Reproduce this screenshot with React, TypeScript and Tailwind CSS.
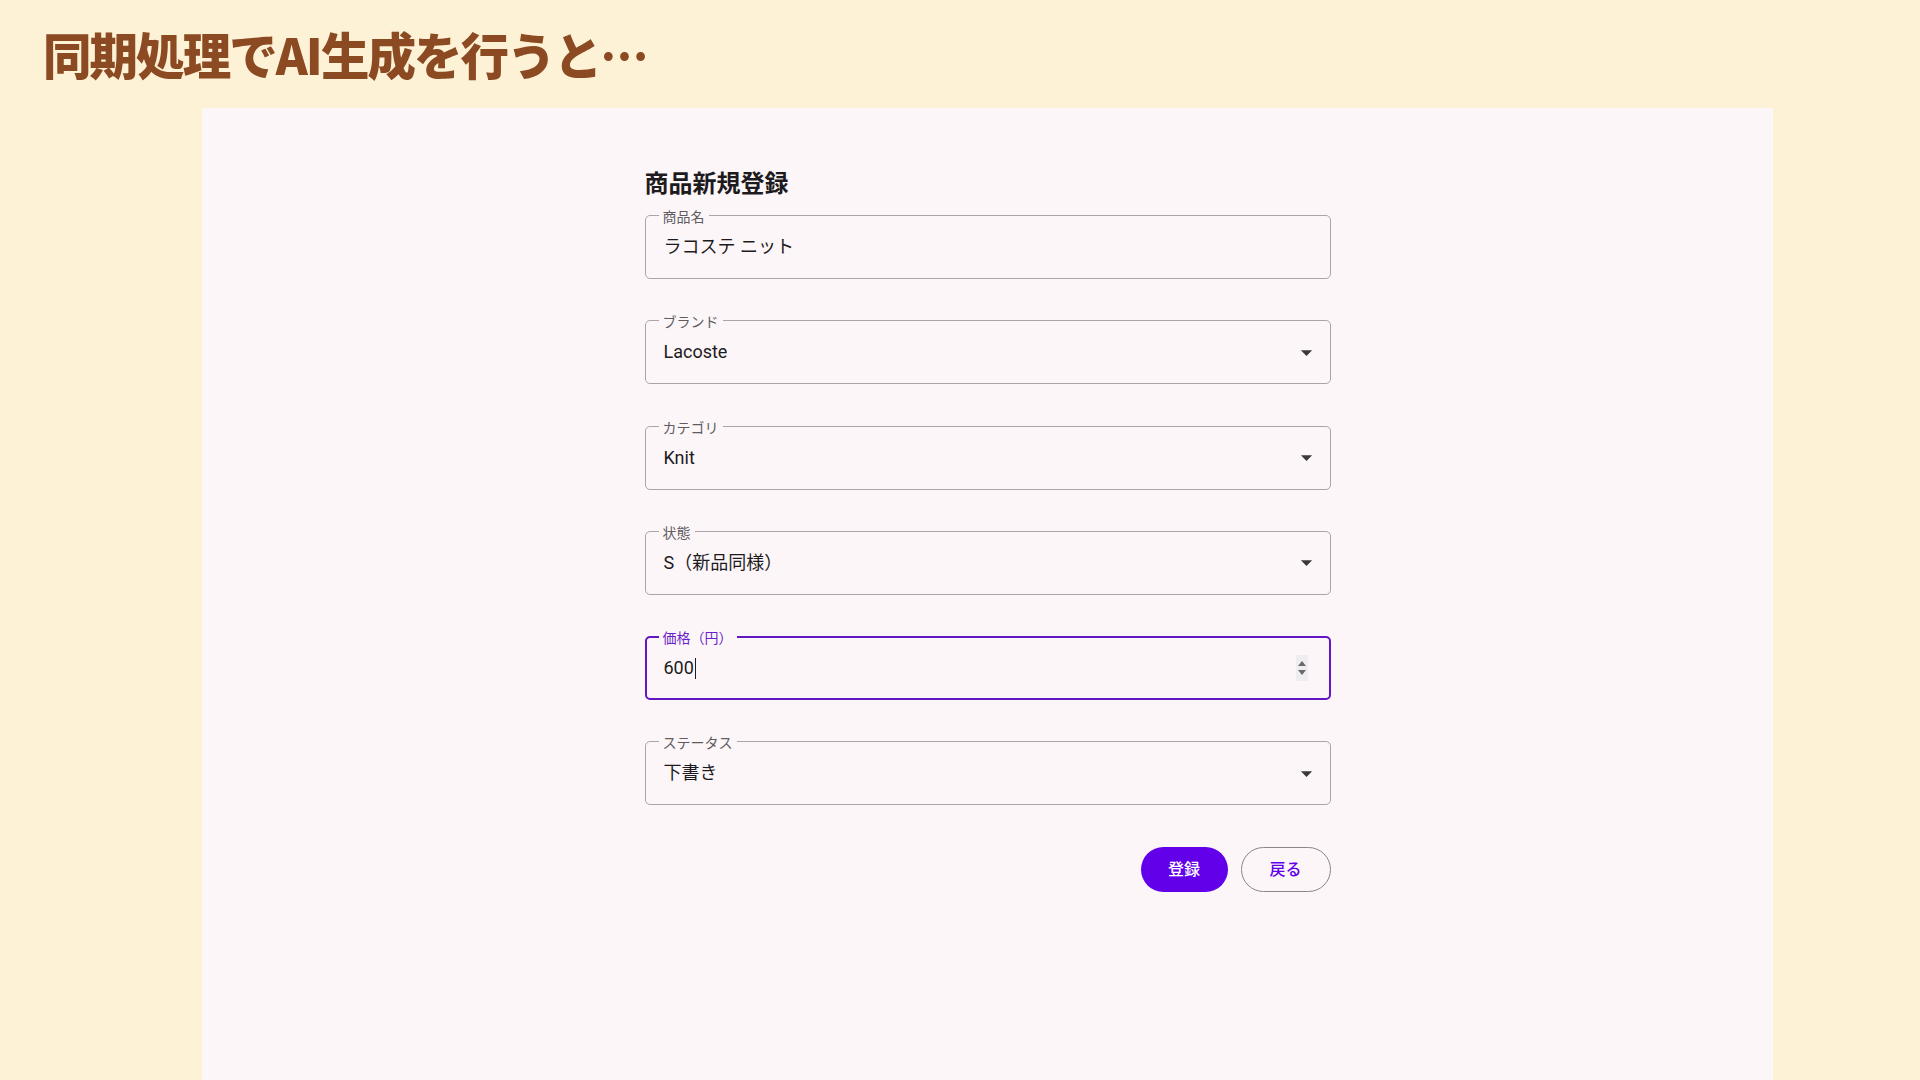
import React from "react";

type Field = {
  label: string;
  value: string;
  kind: "text" | "select" | "number";
  focused?: boolean;
};

const FIELDS: Field[] = [
  { label: "商品名", value: "ラコステ ニット", kind: "text" },
  { label: "ブランド", value: "Lacoste", kind: "select" },
  { label: "カテゴリ", value: "Knit", kind: "select" },
  { label: "状態", value: "S（新品同様）", kind: "select" },
  { label: "価格（円）", value: "600", kind: "number", focused: true },
  { label: "ステータス", value: "下書き", kind: "select" },
];

function DropArrow() {
  return (
    <svg width="27" height="27" viewBox="0 0 24 24" className="text-[#3a383c]">
      <path d="M7 10l5 5 5-5z" fill="currentColor" />
    </svg>
  );
}

function Spinner() {
  return (
    <div className="flex h-[26px] w-[12px] flex-col items-center justify-center gap-[4px] bg-[#efedf0]">
      <svg width="8" height="5" viewBox="0 0 8 5">
        <path d="M0 5l4-5 4 5z" fill="#6b686c" />
      </svg>
      <svg width="8" height="5" viewBox="0 0 8 5">
        <path d="M0 0l4 5 4-5z" fill="#6b686c" />
      </svg>
    </div>
  );
}

function OutlinedField({ field }: { field: Field }) {
  const box = field.focused
    ? "border-2 border-[#6216c4]"
    : "border border-[#a9a5a8]";
  return (
    <div className={`relative flex h-[64px] items-center rounded-[5px] ${box}`}>
      {/* floating label sits in the notch of the outline */}
      <span
        className={`absolute bg-[#fcf6f9] px-[4px] text-[14px] leading-[18px] ${
          field.focused ? "left-[12px] top-[-9px] text-[#6a1fc8]" : "left-[13px] top-[-8px] text-[#5f5b61]"
        }`}
      >
        {field.label}
      </span>
      <div
        className={`flex flex-1 items-center text-[18px] leading-[24px] text-[#1d1b20] ${
          field.focused ? "pl-[17px]" : "pl-[18px]"
        }`}
      >
        <span>{field.value}</span>
        {field.focused && <span className="ml-[1px] h-[21px] w-[1px] bg-[#1d1b20]" />}
      </div>
      {field.kind === "select" && (
        <div className="mr-[10px] flex items-center">
          <DropArrow />
        </div>
      )}
      {field.kind === "number" && (
        <div className="mr-[21px] flex items-center">
          <Spinner />
        </div>
      )}
    </div>
  );
}

export default function App() {
  return (
    <div className="flex h-[1080px] w-[1920px] flex-col overflow-hidden bg-[#fdf1d6] font-[Roboto,'Noto_Sans_CJK_JP',sans-serif]">
      <div className="h-[108px] shrink-0 pl-[43px] pt-[28px]">
        <h1 className="origin-left scale-x-[0.97] font-['Noto_Sans_CJK_JP',sans-serif] text-[50px] font-black leading-none tracking-[-2px] text-[#8b4a22]">
          同期処理でAI生成を行うと…
        </h1>
      </div>

      <div className="ml-[202px] flex w-[1571px] flex-1 justify-center bg-[#fcf6f9]">
        <div className="w-[686px] pt-[60px]">
          <h2 className="text-[24px] font-bold leading-[32px] text-[#1d1b20]">商品新規登録</h2>

          <div className="mt-[15px] flex flex-col gap-[41.3px]">
            {FIELDS.map((f) => (
              <OutlinedField key={f.label} field={f} />
            ))}
          </div>

          <div className="mt-[42px] flex justify-end gap-[13px]">
            <button className="h-[45px] w-[87px] rounded-full bg-[#6200ea] text-[16px] font-medium text-white">
              登録
            </button>
            <button className="h-[45px] w-[90px] rounded-full border border-[#8a868b] text-[16px] font-medium text-[#6200ea]">
              戻る
            </button>
          </div>
        </div>
      </div>
    </div>
  );
}
